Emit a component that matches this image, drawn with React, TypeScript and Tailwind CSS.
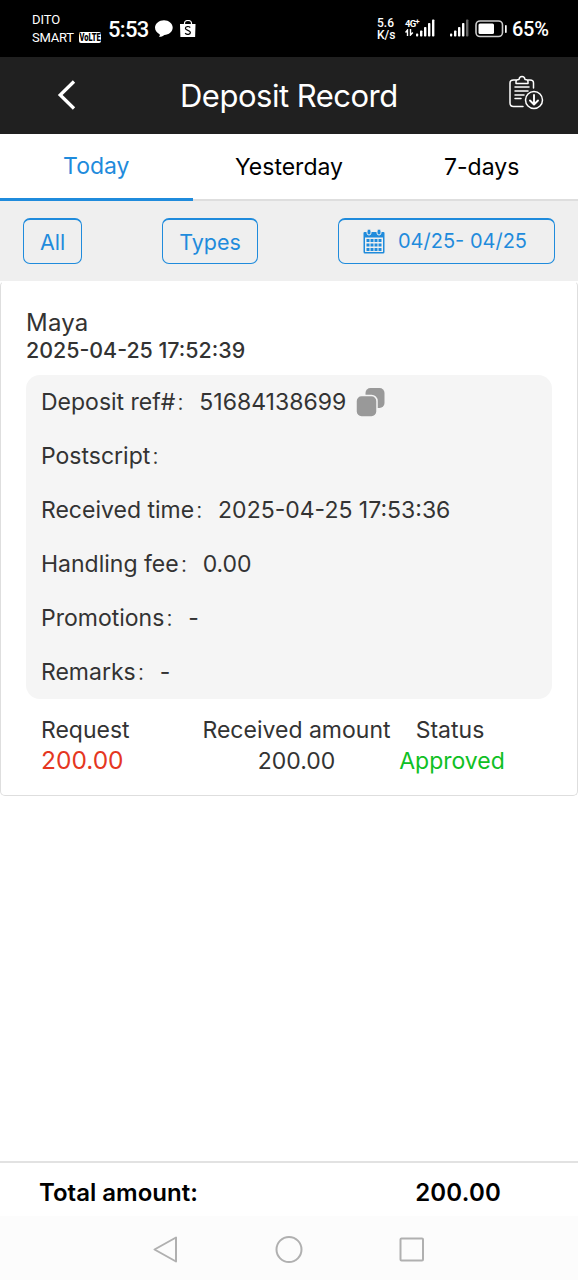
import type { ReactNode } from "react";

function SignalBars({ dim = false }: { dim?: boolean }) {
  return (
    <svg width="20" height="18" viewBox="0 0 20 18" fill="#fff">
      <rect x="0" y="14.5" width="2.2" height="3" rx=".8" />
      <rect x="4" y="11.5" width="2.4" height="6" rx=".8" />
      <rect x="8" y="8" width="2.4" height="9.5" rx=".8" />
      <rect x="12" y="4" width="2.4" height="13.5" rx=".8" />
      <rect x="16" y="0.5" width="2.4" height="17" rx=".8" opacity={dim ? 0.4 : 1} />
    </svg>
  );
}

function StatusBar() {
  return (
    <div className="flex h-[57px] items-start bg-black pl-8 font-['Roboto','Noto_Sans',sans-serif] text-white">
      <div className="flex w-[70px] flex-col pt-[10px]">
        <span className="h-[18px] text-[13px] leading-[19px] tracking-[-0.100px]">DITO</span>
        <div className="flex h-[19px] items-center">
          <span className="w-[47px] text-[13px] leading-[20px] tracking-[-0.200px] whitespace-nowrap">SMART</span>
          <span className="flex h-[11px] w-[22px] shrink-0 items-center justify-center rounded-[2px] bg-white text-black">
            <span className="scale-x-[.75] text-[10px] leading-none font-black">VoLTE</span>
          </span>
        </div>
      </div>
      <span className="ml-[6px] w-[46px] pt-[15px] text-[22px] leading-[30px] font-medium tracking-[-0.700px] whitespace-nowrap">5:53</span>
      <svg className="mt-[20px] ml-px" width="18" height="18" viewBox="0 0 18 18" fill="#fff">
        <path d="M9 0.2C13.8 .2 17.7 3.5 17.7 7.6S13.8 15 9.4 15.1C8 16.4 6 17 4 17c.8-.8 1-1.700.6-2.700C2 13 0 10.600 0 7.600 0 3.500 4.100.2 9 .2Z" />
      </svg>
      <svg className="mt-[20px] ml-[7px]" width="16" height="18" viewBox="0 0 16 18">
        <path d="M4.500 5V3.500a3.500 3 0 0 1 7 0V5" fill="none" stroke="#fff" strokeWidth="1.200" />
        <path d="M0 4h15.500l-.4 13H.4Z" fill="#fff" />
        <path d="M10.300 7.500C8.800 6 5.400 6.200 5.400 8.300c0 2.400 5 1.700 5 4.200 0 2.300-3.600 2.300-5.300.8" fill="none" stroke="#000" strokeWidth="1.200" />
      </svg>
      <div className="ml-[181px] flex w-[20px] flex-col pt-[17px] text-[12px] font-medium whitespace-nowrap">
        <span className="h-[12px] leading-[12px]">5.6</span>
        <span className="h-[12px] leading-[12px]">K/s</span>
      </div>
      <div className="mt-[19px] ml-[8px] flex h-[18px] w-[31px] items-start">
        <div className="flex w-[11px] flex-col">
          <span className="flex h-[10px] text-[9.5px] leading-[9px] font-bold tracking-[-0.800px]">
            4G<span className="text-[8px] leading-[6px]">+</span>
          </span>
          <svg width="9" height="7" viewBox="0 0 9 7" fill="none" stroke="#fff" strokeWidth="1.400">
            <path d="M2.500 7V1L.5 3.500M5.500 0v6l2.300-2.500" />
          </svg>
        </div>
        <SignalBars />
      </div>
      <div className="mt-[19px] ml-[14px]">
        <SignalBars dim />
      </div>
      <svg className="mt-[20px] ml-[5px]" width="33" height="18" viewBox="0 0 33 18">
        <rect x="1" y="1" width="26.500" height="15.500" rx="4" fill="none" stroke="#ccc" strokeWidth="1.600" />
        <rect x="3.500" y="3.500" width="15.500" height="10.500" rx="1.500" fill="#fff" />
        <rect x="30" y="5" width="1.700" height="8" rx=".8" fill="#fff" />
      </svg>
      <span className="ml-[4px] pt-[15px] text-[20px] leading-[28px] font-medium tracking-[-0.300px] whitespace-nowrap">65%</span>
    </div>
  );
}

function Header() {
  return (
    <div className="flex h-[77px] items-center bg-[#202020] text-white">
      <svg className="mb-px ml-[57px]" width="20" height="30" viewBox="0 0 20 30" fill="none" stroke="#fff" strokeWidth="3.300">
        <path d="M17 1.500 3.200 15 17 28.500" />
      </svg>
      <h1 className="mt-px ml-[103px] w-[218px] text-[31px] leading-[40px] tracking-[-0.500px] whitespace-nowrap">Deposit Record</h1>
      <svg className="mb-[5px] ml-[111px]" width="36" height="36" viewBox="0 0 36 36" fill="none" stroke="#fff" strokeWidth="1.500" strokeLinecap="round" strokeLinejoin="round">
        <path d="M7 5H4.500C2.500 5 1 6.200 1 8v20c0 2 1.500 3.500 3.500 3.500H14M19 5h2c2 0 3.500 1.200 3.500 3v5" />
        <path d="M7 8.500V6.500C7 5 8 4.500 10 4.500 10.500 0.500 15.500.5 16 4.500c2 0 3 .5 3 2V8.500Z" />
        <path d="M6 12h14M6 16h13M6 20h9M6 23.500h6" />
        <circle cx="25" cy="25" r="8.500" />
        <path d="M25 20v9M21 25.500l4 4 4-4" strokeWidth="1.900" />
      </svg>
    </div>
  );
}

function Tabs() {
  return (
    <div className="grid h-[67px] grid-cols-3 text-center text-[23px] leading-[64px]">
      <div className="border-b-[3px] border-[#1f8bdc] text-[#1f8bdc]">Today</div>
      <div className="border-b-2 border-[#dedede] pt-px text-black">Yesterday</div>
      <div className="border-b-2 border-[#dedede] pt-px text-black">7-days</div>
    </div>
  );
}

function Filters() {
  return (
    <div className="flex h-[80px] items-start bg-[#efefef] pt-[17px] pl-[23px] text-[21.5px] text-[#1f8bdc]">
      <div className="h-[46px] w-[59px] rounded-[7px] border border-t-2 border-[#1f8bdc] text-center leading-[44px]">All</div>
      <div className="ml-[80px] h-[46px] w-[96px] rounded-[7px] border border-t-2 border-[#1f8bdc] text-center leading-[44px]">Types</div>
      <div className="ml-[80px] flex h-[46px] w-[217px] items-start rounded-[7px] border border-t-2 border-[#1f8bdc]">
        <svg className="mt-[9px] ml-[24px]" width="22" height="25" viewBox="0 0 22 25">
          <path d="M1.500 3h19a1 1 0 0 1 1 1v19a1.500 1.500 0 0 1-1.500 1.500H2A1.500 1.500 0 0 1 .5 23V4a1 1 0 0 1 1-1Z" fill="#1f8bdc" />
          <path d="M2 8.500h18v14.500H2Z" fill="#efefef" />
          <rect x="4" y="0" width="4" height="6" rx="2" fill="#1f8bdc" stroke="#efefef" />
          <rect x="14" y="0" width="4" height="6" rx="2" fill="#1f8bdc" stroke="#efefef" />
          <g fill="#1f8bdc">
            {[10, 14.5, 19].map((y) => [3.5, 7.5, 11.5, 15.5].map((x) => <rect key={`${x}-${y}`} x={x} y={y} width="3" height="3" />))}
          </g>
        </svg>
        <span className="ml-[13px] text-[20px] leading-[42px] whitespace-nowrap">04/25- 04/25</span>
      </div>
    </div>
  );
}

function Row({ label, children }: { label: string; children?: ReactNode }) {
  return (
    <div className="flex h-[54px] items-center whitespace-nowrap">
      <span>{label}</span>
      <span className="ml-[2px] w-[6px] font-light">:</span>
      <div className="ml-[16px] flex items-center">{children}</div>
    </div>
  );
}

function RecordCard() {
  return (
    <div className="h-[515px] rounded-[5px] border border-[#dedede] border-t-white px-[25px] text-[23px] text-[#333]">
      <div className="mt-[25px] h-[30px] text-[24px] leading-[31px] tracking-[0.200px]">Maya</div>
      <div className="h-[38px] text-[21.400px] leading-[26px] font-medium whitespace-nowrap">2025-04-25 17:52:39</div>
      <div className="h-[324px] rounded-[14px] bg-[#f5f5f5] pl-[15px]">
        <Row label="Deposit ref#">
          <span>51684138699</span>
          <svg className="ml-[10px]" width="30" height="30" viewBox="0 0 30 30">
            <rect x="9.500" y="1" width="19" height="20" rx="5" fill="#999" />
            <rect x="0" y="8.500" width="21" height="21.500" rx="5.500" fill="#999" stroke="#f5f5f5" strokeWidth="1.500" />
          </svg>
        </Row>
        <Row label="Postscript" />
        <Row label="Received time">2025-04-25 17:53:36</Row>
        <Row label="Handling fee">0.00</Row>
        <Row label="Promotions">-</Row>
        <Row label="Remarks">-</Row>
      </div>
      <div className="mt-[16px] flex pl-[15px] leading-[31px] whitespace-nowrap">
        <div className="w-[161px]">
          <div>Request</div>
          <div className="text-[24.500px] leading-[29px] text-[#e5371f]">200.00</div>
        </div>
        <div className="w-[189px] text-center">
          <div>Received amount</div>
          <div>200.00</div>
        </div>
        <div className="ml-[8px] w-[106px] text-center">
          <div className="pr-[4px]">Status</div>
          <div className="text-[#0fc024]">Approved</div>
        </div>
      </div>
    </div>
  );
}

function BottomNav() {
  return (
    <div className="flex h-[64px] items-start bg-[#fcfcfc] pt-[19px] pl-[152px]">
      <svg width="26" height="30" viewBox="0 0 26 30" fill="none" stroke="#b0b0b0" strokeWidth="2" strokeLinejoin="round">
        <path d="M24 2.500v24L2.500 14.500Z" />
      </svg>
      <svg className="ml-[96px]" width="30" height="30" viewBox="0 0 30 30" fill="none" stroke="#b0b0b0" strokeWidth="2">
        <circle cx="15" cy="14.500" r="12.500" />
      </svg>
      <svg className="ml-[94px]" width="28" height="30" viewBox="0 0 28 30" fill="none" stroke="#b0b0b0" strokeWidth="2">
        <rect x="2.500" y="3.500" width="22.500" height="22" rx="1" />
      </svg>
    </div>
  );
}

export default function App() {
  return (
    <div className="flex h-[1280px] w-[578px] flex-col overflow-hidden bg-white font-['Inter','Noto_Sans',sans-serif]">
      <StatusBar />
      <Header />
      <Tabs />
      <Filters />
      <RecordCard />
      <div className="flex-1" />
      <div className="flex h-[55px] items-center justify-between border-t-2 border-[#e2e2e2] pt-[6px] pr-[77px] pl-[39px] text-[24px] font-semibold whitespace-nowrap text-black">
        <span>Total amount:</span>
        <span className="tracking-[0.200px]">200.00</span>
      </div>
      <BottomNav />
    </div>
  );
}
